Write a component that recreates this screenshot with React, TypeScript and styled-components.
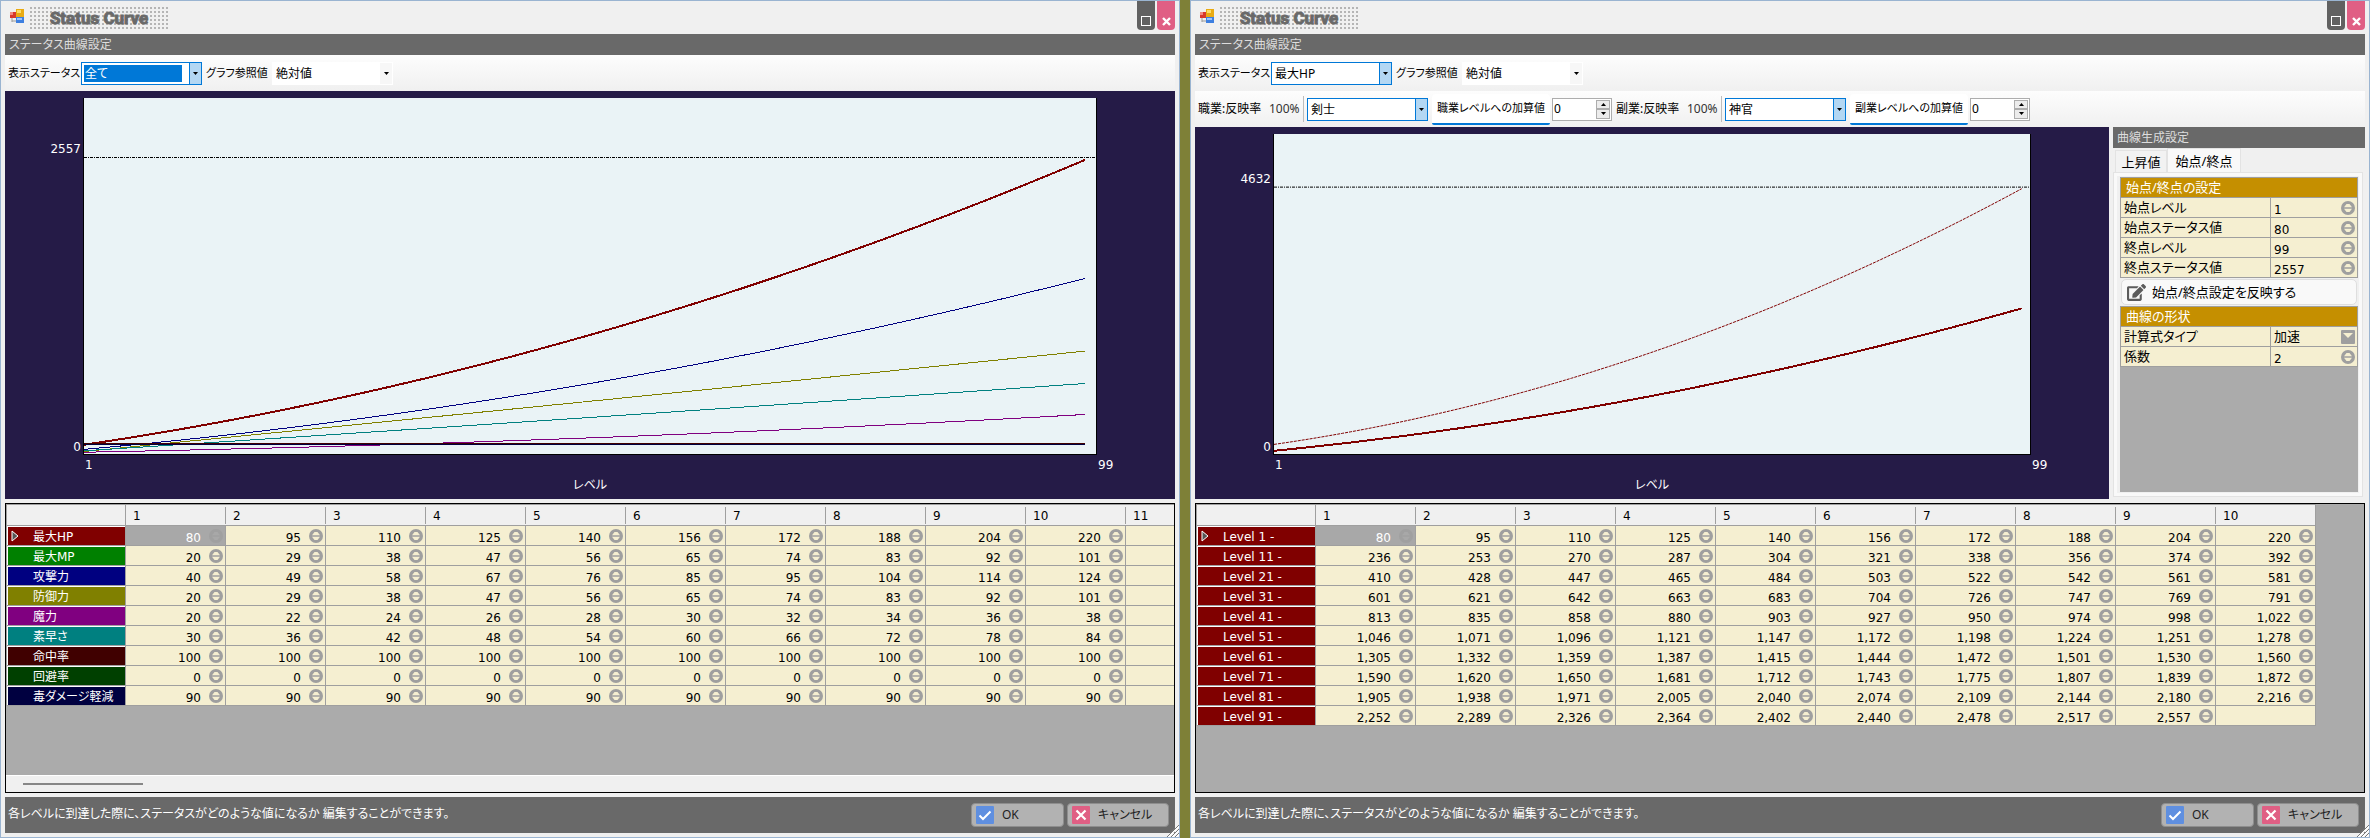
import React from "react";
import styled, { createGlobalStyle, css } from "styled-components";
import { FaEdit } from "react-icons/fa";

const uiFont = `"Noto Sans", "Noto Sans CJK JP", sans-serif`;
const numberFont = `"DejaVu Sans", "Noto Sans CJK JP", sans-serif`;
const line = "#9f9f9f";
const cream = "#f5efd1";
const bar = "#696969";
const navy = "#251b47";
const accent = "#0078d7";

const GlobalStyle = createGlobalStyle`
  *, *::before, *::after { box-sizing: border-box; }
  body {
    margin: 0;
    background: #7e8037;
    color: #000;
    font-family: ${uiFont};
    font-size: 12px;
    line-height: 16px;
    font-feature-settings: "palt";
  }
  button, input, select { font: inherit; color: inherit; font-feature-settings: inherit; }
`;

const Desktop = styled.main`
  display: grid;
  grid-template-columns: minmax(0, 1fr) minmax(0, 1fr);
  gap: 10px;
  min-height: 100vh;
`;

const Window = styled.section`
  position: relative;
  display: flex;
  flex-direction: column;
  padding: 0 4px 4px;
  border: 1px solid #9ab4d1;
  background: #f0f0f0;
`;

const TitleBar = styled.header`
  display: flex;
  align-items: flex-start;
  height: 33px;
  padding-left: 5px;
`;

const AppIcon = styled.svg`
  width: 14px;
  height: 14px;
  margin-top: 8px;
`;

const TitleGrip = styled.div`
  width: 138px;
  height: 22px;
  margin: 6px 0 0 6px;
  background-image: repeating-linear-gradient(180deg, transparent 0 2px, #f0f0f0 2px 4px),
    repeating-linear-gradient(90deg, #b5b5b5 0 2px, #f0f0f0 2px 4px);
`;

const Title = styled.h1`
  margin: 0;
  text-align: center;
  color: ${bar};
  font: bold 17px/23px Roboto, "Liberation Sans", sans-serif;
  -webkit-text-stroke: 1px ${bar};
`;

const WindowButtons = styled.div`
  display: flex;
  gap: 2px;
  margin-left: auto;
`;

const WindowButton = styled.button<{ $color: string }>`
  display: flex;
  width: 18px;
  height: 29px;
  padding: 0 4px 4px;
  align-items: flex-end;
  justify-content: center;
  border: 0;
  border-radius: 0 0 4px 4px;
  background: ${(p) => p.$color};
`;

const Caption = styled.h2`
  height: 21px;
  margin: 0;
  padding: 0 4px;
  background: ${bar};
  color: #ddd;
  font-size: 12px;
  font-weight: 400;
  line-height: 21px;
`;

const Toolbar = styled.div`
  display: flex;
  align-items: center;
  height: 36px;
  padding-left: 3px;
  background: linear-gradient(#fdfdfd, #f0f0f0);
  white-space: nowrap;
`;

const ToolLabel = styled.label<{ $width: number }>`
  width: ${(p) => p.$width}px;
  font-size: 11px;
`;

const RateLabel = styled.label`
  width: 71px;
`;

const Rate = styled.output`
  width: 33px;
  color: #333;
`;

const Separator = styled.span`
  width: 1px;
  height: 26px;
  margin: 0 3px 0 1px;
  background: #bdbdbd;
`;

const SelectBox = styled.span<{ $flat?: boolean }>`
  position: relative;
  display: flex;
  width: 121px;
  height: 23px;
  margin-right: 4px;
  border: 1px solid ${(p) => (p.$flat ? "#fff" : accent)};
  background: #fff;

  &::after {
    content: "";
    position: absolute;
    top: 0;
    right: 0;
    width: 12px;
    height: 21px;
    border-left: 1px solid ${(p) => (p.$flat ? "#f7f7f7" : accent)};
    background: ${(p) => (p.$flat ? "#f7f7f7" : "#b3d7f3")};
    pointer-events: none;
  }
`;

const Select = styled.select<{ $selected?: boolean }>`
  flex: 1;
  padding: 0 14px 0 3px;
  appearance: none;
  border: 0;
  outline: 0;
  background: transparent;
  line-height: 21px;
  ${(p) =>
    p.$selected &&
    css`
      color: #fff;
      background: linear-gradient(${accent}, ${accent}) 2px 2px / 98px 17px no-repeat;
      option { color: #000; }
    `}
`;

const SelectArrow = styled.svg`
  position: absolute;
  z-index: 1;
  top: 9px;
  right: 3px;
  width: 5px;
  height: 3px;
  pointer-events: none;
`;

const AddLabel = styled.label`
  width: 118px;
  height: 31px;
  margin-right: 2px;
  border-bottom: 2px solid ${accent};
  border-radius: 4px 4px 2px 2px;
  background: #fff;
  font-size: 11px;
  line-height: 28px;
  text-align: center;
`;

const SpinBox = styled.span`
  display: flex;
  width: 60px;
  height: 23px;
  padding: 1px;
  margin-right: 4px;
  border: 1px solid #adadad;
  background: #fff;
`;

const SpinInput = styled.input`
  flex: 1;
  min-width: 0;
  height: 18px;
  padding: 0;
  border: 0;
  outline: 0;
`;

const SpinButtons = styled.span`
  display: flex;
  flex-direction: column;
  width: 14px;
`;

const SpinButton = styled.button`
  display: flex;
  flex: 1;
  align-items: center;
  justify-content: center;
  padding: 0;
  border: 1px solid #adadad;
  background: #ececec;
`;

const Body = styled.div<{ $split?: boolean }>`
  display: grid;
  grid-template-columns: ${(p) => (p.$split ? "minmax(0, 1fr) 252px" : "minmax(0, 1fr)")};
  gap: 4px;
  flex: 1;
`;

const GraphArea = styled.figure`
  display: grid;
  grid-template-columns: 78px minmax(0, 1fr) 78px;
  grid-template-rows: minmax(200px, 1fr) 44px;
  margin: 0;
  padding-top: 7px;
  background: ${navy};
  color: #fff;
  font-family: ${numberFont};
`;

const YAxis = styled.div`
  display: grid;
  grid-template-rows: 59fr 298fr;
  align-items: end;
  padding-right: 2px;
  text-align: right;
`;

const Plot = styled.svg`
  width: 100%;
  height: 100%;
  min-height: 0;
  border: 1px solid #000;
  border-top: 0;
  background: #eaf3f6;
`;

const PlotCell = styled.div`
  display: flex;
  grid-column: 2 / 4;
  min-height: 0;
  margin-right: 78px;
  contain: size;
`;

const XAxis = styled.div`
  display: grid;
  grid-column: 2;
  align-content: start;
  row-gap: 4px;
  padding-top: 2px;
`;

const XStart = styled.span`
  padding-left: 2px;
`;

const XName = styled.span`
  font-family: ${uiFont};
  text-align: center;
`;

const XEnd = styled.span`
  padding: 2px 0 0 1px;
`;

const GridBox = styled.div`
  display: flex;
  flex-direction: column;
  height: 290px;
  margin-top: 4px;
  overflow: hidden;
  border: 1px solid #000;
  background: #ababab;
`;

const GridClip = styled.div`
  flex: 1;
  overflow: hidden;
`;

const DataTable = styled.table<{ $columns: number }>`
  width: ${(p) => 120 + p.$columns * 100}px;
  table-layout: fixed;
  border-collapse: separate;
  border-spacing: 0;
  font-family: ${numberFont};
  white-space: nowrap;
`;

const HeadCell = styled.th<{ $corner?: boolean; $last?: boolean }>`
  width: ${(p) => (p.$corner ? 120 : 100)}px;
  height: 22px;
  padding: 2px 0 0 7px;
  border: solid ${line};
  border-width: 1px ${(p) => (p.$corner || p.$last ? 1 : 0)}px 1px ${(p) => (p.$corner ? 1 : 0)}px;
  background: ${(p) => (p.$corner || p.$last ? "none" : `linear-gradient(${line}, ${line}) right center / 1px 17px no-repeat`)}
    #f0f0f0;
  font-weight: 400;
  line-height: 16px;
  text-align: left;
`;

const RowHead = styled.th<{ $color: string }>`
  height: 20px;
  padding: 0;
  border: solid ${line};
  border-width: 0 1px 1px 1px;
  background: ${(p) => p.$color};
  box-shadow: inset 1px 1px 0 #fff;
  color: #fff;
  font-weight: 400;
  text-align: left;
`;

const RowHeadInner = styled.span`
  display: grid;
  grid-template-columns: 22px 1fr;
  align-items: center;
  height: 19px;
  padding: 2px 0 0 4px;
  line-height: 16px;
`;

const RowMarker = styled.svg`
  width: 9px;
  height: 12px;
  margin-bottom: 2px;
`;

const ValueCell = styled.td<{ $selected?: boolean }>`
  height: 20px;
  padding: 0;
  border: solid ${line};
  border-width: 0 1px 1px 0;
  background: ${(p) => (p.$selected ? "#a8a8a8" : cream)};
  color: ${(p) => (p.$selected ? "#fff" : "#000")};
`;

const ValueInner = styled.span`
  display: flex;
  justify-content: flex-end;
  gap: 8px;
  height: 19px;
  padding-right: 2px;
  line-height: 25px;
`;

const RoundButton = styled.button<{ $dim?: boolean }>`
  display: block;
  flex: none;
  width: 14px;
  height: 14px;
  margin-top: 3px;
  padding: 0;
  border: 0;
  background: none;
  opacity: ${(p) => (p.$dim ? 0.8 : 1)};

  svg { display: block; }
`;

const ScrollTrack = styled.div`
  height: 17px;
  padding: 7px 17px;
  border-top: 1px solid #fff;
  background: #f0f0f0;
`;

const ScrollThumb = styled.div`
  width: 120px;
  height: 2px;
  background: #878787;
`;

const StatusBar = styled.footer`
  display: flex;
  align-items: center;
  gap: 3px;
  height: 36px;
  margin-top: 4px;
  padding: 0 6px 0 3px;
  background: ${bar};
  color: #fff;
`;

const Message = styled.p`
  flex: 1;
  margin: 0;
  padding-bottom: 2px;
`;

const DialogButton = styled.button<{ $width: number }>`
  display: flex;
  align-items: center;
  gap: 8px;
  width: ${(p) => p.$width}px;
  height: 24px;
  padding: 0 4px;
  border: 1px solid #8e8e8e;
  border-radius: 4px;
  background: #b2b2b2;
  color: #222;
`;

const ResizeGrip = styled.svg`
  position: absolute;
  right: 0;
  bottom: 0;
  width: 12px;
  height: 12px;
`;

const SidePanel = styled.aside`
  display: flex;
  flex-direction: column;
  padding-bottom: 2px;
`;

const Tabs = styled.div`
  display: flex;
  align-items: flex-end;
  height: 24px;
  padding-left: 2px;
`;

const Tab = styled.button<{ $active?: boolean }>`
  width: ${(p) => (p.$active ? 74 : 52)}px;
  height: ${(p) => (p.$active ? 24 : 22)}px;
  padding: 0;
  border: 1px solid #e3e3e3;
  border-bottom: 0;
  background: ${(p) => (p.$active ? "#f9f9f9" : "#f2f2f2")};
  font-size: 13px;
`;

const TabPage = styled.div`
  display: flex;
  flex: 1;
  flex-direction: column;
  margin-right: 2px;
  border: 1px solid #e3e3e3;
  padding: 3px;
  background: #f9f9f9;
`;

const TabContent = styled.div`
  display: flex;
  flex: 1;
  flex-direction: column;
  padding: 1px 1px 1px 3px;
  background: #f0f0f0;
`;

const PropTable = styled.table`
  width: 100%;
  table-layout: fixed;
  border-collapse: separate;
  border-spacing: 0;
  border: solid ${line};
  border-width: 1px 0 0 1px;
  font-size: 13px;
`;

const PropTitle = styled.th`
  height: 20px;
  padding: 0 5px;
  border: solid ${line};
  border-width: 0 1px 1px 0;
  background: #c58f00;
  color: #fff;
  font-weight: 400;
  line-height: 19px;
  text-align: left;
`;

const PropCell = styled.td`
  height: 20px;
  padding: 0 0 0 3px;
  border: solid ${line};
  border-width: 0 1px 1px 0;
  background: ${cream};
  line-height: 19px;
`;

const PropValue = styled.span`
  display: flex;
  height: 19px;
  padding-right: 2px;
`;

const PropInput = styled.input`
  flex: 1;
  min-width: 0;
  height: 19px;
  padding: 5px 0 0;
  border: 0;
  outline: 0;
  background: transparent;
  font: 12px/14px ${numberFont};
`;

const PropSelect = styled.select`
  flex: 1;
  min-width: 0;
  height: 19px;
  padding: 0;
  appearance: none;
  border: 0;
  background: transparent;
`;

const PropArrow = styled.svg`
  width: 14px;
  height: 14px;
  margin-top: 3px;
`;

const ApplyButton = styled.button`
  display: flex;
  align-items: center;
  gap: 6px;
  height: 26px;
  margin: 1px 1px;
  padding: 0 5px;
  border: 1px solid #dedede;
  border-radius: 5px;
  background: #f9f9f9;
  font-size: 13px;

  svg { color: #5c5c5c; }
`;

const PropFiller = styled.div`
  flex: 1;
  background: #ababab;
`;

type Curve = { color: string; from: number; to: number; bend: number; width: number; dash?: string };

// Samples one status curve across the plot, which is 1000 units wide and high.
function curvePoints({ from, to, bend }: Curve) {
  return Array.from({ length: 99 }, (_, i) => {
    const t = i / 98;
    const rise = (1 - bend) * t + bend * t * t;
    return `${(t * 989).toFixed(1)},${(from + (to - from) * rise).toFixed(1)}`;
  }).join(" ");
}

function Graph({ max, curves, zero }: { max: string; curves: Curve[]; zero?: boolean }) {
  return (
    <GraphArea>
      <YAxis>
        <span>{max}</span>
        <span>0</span>
      </YAxis>
      <PlotCell>
        <Plot viewBox="0 0 1000 1000" preserveAspectRatio="none" shapeRendering="crispEdges" role="img" aria-label="ステータス曲線">
          <line x1="0" x2="1000" y1="166" y2="166" stroke="#000" strokeDasharray="3 1 1 1" vectorEffect="non-scaling-stroke" />
          {curves.map((c) => (
            <polyline
              key={c.color + c.from}
              points={curvePoints(c)}
              fill="none"
              stroke={c.color}
              strokeWidth={c.width}
              strokeDasharray={c.dash}
              vectorEffect="non-scaling-stroke"
            />
          ))}
          {zero && (
            <>
              <line x1="0" x2="989" y1="971" y2="971" stroke="#400000" vectorEffect="non-scaling-stroke" />
              <line x1="0" x2="989" y1="974" y2="974" stroke="#000040" vectorEffect="non-scaling-stroke" />
            </>
          )}
        </Plot>
      </PlotCell>
      <XAxis>
        <XStart>1</XStart>
        <XName>レベル</XName>
      </XAxis>
      <XEnd>99</XEnd>
    </GraphArea>
  );
}

function Stepper({ dim }: { dim?: boolean }) {
  const inner = dim ? "#a8a8a8" : cream;
  return (
    <RoundButton type="button" aria-label="値を変更" $dim={dim}>
      <svg width="14" height="14" viewBox="0 0 14 14">
        <circle cx="7" cy="7" r="7" fill="#9f9f9f" />
        <path d="M3 6.2 L5.5 3 H8.5 L11 6.2 Z M3 7.8 L5.5 11 H8.5 L11 7.8 Z" fill={inner} />
      </svg>
    </RoundButton>
  );
}

function DropDown({ id, value, flat, selected }: { id: string; value: string; flat?: boolean; selected?: boolean }) {
  return (
    <SelectBox $flat={flat}>
      <Select id={id} defaultValue={value} $selected={selected}>
        <option>{value}</option>
      </Select>
      <SelectArrow viewBox="0 0 5 3">
        <path d="M0 0H5L2.5 3Z" />
      </SelectArrow>
    </SelectBox>
  );
}

function Spinner({ id }: { id: string }) {
  return (
    <SpinBox>
      <SpinInput id={id} defaultValue="0" />
      <SpinButtons>
        <SpinButton type="button" aria-label="増やす">
          <svg width="5" height="3" viewBox="0 0 5 3"><path d="M0 3H5L2.5 0Z" /></svg>
        </SpinButton>
        <SpinButton type="button" aria-label="減らす">
          <svg width="5" height="3" viewBox="0 0 5 3"><path d="M0 0H5L2.5 3Z" /></svg>
        </SpinButton>
      </SpinButtons>
    </SpinBox>
  );
}

function JobFields({ id, kind, job }: { id: string; kind: string; job: string }) {
  return (
    <>
      <RateLabel htmlFor={`${id}-job`}>{kind}:反映率</RateLabel>
      <Rate>100%</Rate>
      <Separator />
      <DropDown id={`${id}-job`} value={job} />
      <AddLabel htmlFor={`${id}-add`}>{kind}レベルへの加算値</AddLabel>
      <Spinner id={`${id}-add`} />
    </>
  );
}

type Row = { name: string; color: string; values: string[] };

function StatusTable({ rows, columns }: { rows: Row[]; columns: number }) {
  const indexes = Array.from({ length: columns }, (_, i) => i);
  const last = columns === 10 ? 9 : -1;
  return (
    <DataTable $columns={columns}>
      <thead>
        <tr>
          <HeadCell $corner aria-label="項目" />
          {indexes.map((i) => (
            <HeadCell key={i} scope="col" $last={i === last}>{i + 1}</HeadCell>
          ))}
        </tr>
      </thead>
      <tbody>
        {rows.map((row, r) => (
          <tr key={row.name}>
            <RowHead scope="row" $color={row.color}>
              <RowHeadInner>
                {r === 0 ? (
                  <RowMarker viewBox="0 0 9 12">
                    <path d="M1 1 L7 6 L1 11 Z" fill="#555" stroke="#fff" />
                  </RowMarker>
                ) : (
                  <span />
                )}
                <span>{row.name}</span>
              </RowHeadInner>
            </RowHead>
            {indexes.map((i) => (
              <ValueCell key={i} $selected={r === 0 && i === 0}>
                {row.values[i] !== undefined && (
                  <ValueInner>
                    {row.values[i]}
                    <Stepper dim={r === 0 && i === 0} />
                  </ValueInner>
                )}
              </ValueCell>
            ))}
          </tr>
        ))}
      </tbody>
    </DataTable>
  );
}

type FrameProps = { id: string; status: string; selected?: boolean; children: React.ReactNode };

function Frame({ id, status, selected, children }: FrameProps) {
  return (
    <Window>
      <TitleBar>
        <AppIcon viewBox="0 0 14 14">
          <path d="M0 6H5M2 6V13M2 12H6" stroke="#999" fill="none" />
          <rect x="0" y="3" width="6" height="6" fill="#d8382c" />
          <rect x="0" y="3" width="3" height="3" fill="#f08a80" />
          <rect x="6" y="0" width="8" height="8" fill="#e9ab12" />
          <rect x="7" y="1" width="4" height="3" fill="#fbdc6a" />
          <rect x="6" y="8" width="8" height="6" fill="#3d7fe0" />
          <rect x="7" y="9" width="5" height="2" fill="#9cc4fa" />
        </AppIcon>
        <TitleGrip>
          <Title>Status Curve</Title>
        </TitleGrip>
        <WindowButtons>
          <WindowButton type="button" aria-label="最大化" $color="#616161">
            <svg width="10" height="10" viewBox="0 0 10 10"><rect x=".5" y=".5" width="9" height="9" fill="none" stroke="#fff" /></svg>
          </WindowButton>
          <WindowButton type="button" aria-label="閉じる" $color="#e05f84">
            <svg width="9" height="9" viewBox="0 0 9 9"><path d="M1 1L8 8M8 1L1 8" stroke="#fff" strokeWidth="2.4" /></svg>
          </WindowButton>
        </WindowButtons>
      </TitleBar>
      <Caption>ステータス曲線設定</Caption>
      <Toolbar>
        <ToolLabel $width={73} htmlFor={`${id}-status`}>表示ステータス</ToolLabel>
        <DropDown id={`${id}-status`} value={status} selected={selected} />
        <ToolLabel $width={66} htmlFor={`${id}-reference`}>グラフ参照値</ToolLabel>
        <DropDown id={`${id}-reference`} value="絶対値" flat />
      </Toolbar>
      {children}
      <StatusBar>
        <Message>各レベルに到達した際に、ステータスがどのような値になるか 編集することができます。</Message>
        <DialogButton type="button" $width={93}>
          <svg width="18" height="18" viewBox="0 0 18 18">
            <rect width="18" height="18" rx="1" fill="#5f8fe0" />
            <path d="M3.5 9.5L7 13L14.5 5.5" fill="none" stroke="#fff" strokeWidth="2" />
          </svg>
          OK
        </DialogButton>
        <DialogButton type="button" $width={102}>
          <svg width="18" height="18" viewBox="0 0 18 18">
            <rect width="18" height="18" rx="1" fill="#e05f84" />
            <path d="M4.5 4.5L13.5 13.5M13.5 4.5L4.5 13.5" stroke="#fff" strokeWidth="2.2" />
          </svg>
          キャンセル
        </DialogButton>
      </StatusBar>
      <ResizeGrip viewBox="0 0 12 12">
        <path d="M1 12L12 1M5 12L12 5M9 12L12 9" stroke="#fff" strokeWidth="2" />
        <path d="M0 12L12 0M4 12L12 4M8 12L12 8" stroke="#777" />
      </ResizeGrip>
    </Window>
  );
}

const statusCurves: Curve[] = [
  { color: "#808000", from: 993, to: 711, bend: 0.02, width: 1 },
  { color: "#008080", from: 991, to: 802, bend: 0.04, width: 1 },
  { color: "#800080", from: 995, to: 889, bend: 0.5, width: 1 },
  { color: "#000080", from: 987, to: 507, bend: 0.48, width: 1 },
  { color: "#800000", from: 974, to: 174, bend: 0.48, width: 2 },
];

const hpCurves: Curve[] = [
  { color: "#800000", from: 970, to: 171, bend: 0.58, width: 1, dash: "3 1" },
  { color: "#800000", from: 990, to: 545, bend: 0.48, width: 2 },
];

const statusRows: Row[] = [
  ["最大HP", "#800000", "80 95 110 125 140 156 172 188 204 220"],
  ["最大MP", "#008000", "20 29 38 47 56 65 74 83 92 101"],
  ["攻撃力", "#000080", "40 49 58 67 76 85 95 104 114 124"],
  ["防御力", "#808000", "20 29 38 47 56 65 74 83 92 101"],
  ["魔力", "#800080", "20 22 24 26 28 30 32 34 36 38"],
  ["素早さ", "#008080", "30 36 42 48 54 60 66 72 78 84"],
  ["命中率", "#400000", "100 100 100 100 100 100 100 100 100 100"],
  ["回避率", "#004000", "0 0 0 0 0 0 0 0 0 0"],
  ["毒ダメージ軽減", "#000040", "90 90 90 90 90 90 90 90 90 90"],
].map(([name, color, values]) => ({ name, color, values: values.split(" ") }));

const levelRows: Row[] = [
  "80 95 110 125 140 156 172 188 204 220",
  "236 253 270 287 304 321 338 356 374 392",
  "410 428 447 465 484 503 522 542 561 581",
  "601 621 642 663 683 704 726 747 769 791",
  "813 835 858 880 903 927 950 974 998 1,022",
  "1,046 1,071 1,096 1,121 1,147 1,172 1,198 1,224 1,251 1,278",
  "1,305 1,332 1,359 1,387 1,415 1,444 1,472 1,501 1,530 1,560",
  "1,590 1,620 1,650 1,681 1,712 1,743 1,775 1,807 1,839 1,872",
  "1,905 1,938 1,971 2,005 2,040 2,074 2,109 2,144 2,180 2,216",
  "2,252 2,289 2,326 2,364 2,402 2,440 2,478 2,517 2,557",
].map((values, i) => ({ name: `Level ${i * 10 + 1} -`, color: "#800000", values: values.split(" ") }));

function PropRow({ id, name, value }: { id: string; name: string; value: string }) {
  return (
    <tr>
      <PropCell>
        <label htmlFor={id}>{name}</label>
      </PropCell>
      <PropCell>
        <PropValue>
          <PropInput id={id} defaultValue={value} />
          <Stepper />
        </PropValue>
      </PropCell>
    </tr>
  );
}

function CurveSettings() {
  return (
    <SidePanel>
      <Caption>曲線生成設定</Caption>
      <Tabs role="tablist">
        <Tab type="button" role="tab">上昇値</Tab>
        <Tab type="button" role="tab" aria-selected $active>始点/終点</Tab>
      </Tabs>
      <TabPage>
        <TabContent>
          <PropTable>
            <colgroup><col /><col width="87" /></colgroup>
            <thead>
              <tr><PropTitle colSpan={2}>始点/終点の設定</PropTitle></tr>
            </thead>
            <tbody>
              <PropRow id="start-level" name="始点レベル" value="1" />
              <PropRow id="start-value" name="始点ステータス値" value="80" />
              <PropRow id="end-level" name="終点レベル" value="99" />
              <PropRow id="end-value" name="終点ステータス値" value="2557" />
            </tbody>
          </PropTable>
          <ApplyButton type="button">
            <FaEdit size={19} />
            始点/終点設定を反映する
          </ApplyButton>
          <PropTable>
            <colgroup><col /><col width="87" /></colgroup>
            <thead>
              <tr><PropTitle colSpan={2}>曲線の形状</PropTitle></tr>
            </thead>
            <tbody>
              <tr>
                <PropCell><label htmlFor="formula">計算式タイプ</label></PropCell>
                <PropCell>
                  <PropValue>
                    <PropSelect id="formula" defaultValue="加速"><option>加速</option></PropSelect>
                    <PropArrow viewBox="0 0 14 14">
                      <rect width="14" height="14" rx="1" fill="#9f9f9f" />
                      <path d="M2 3H12L7 8Z" fill={cream} />
                    </PropArrow>
                  </PropValue>
                </PropCell>
              </tr>
              <PropRow id="factor" name="係数" value="2" />
            </tbody>
          </PropTable>
          <PropFiller />
        </TabContent>
      </TabPage>
    </SidePanel>
  );
}

export default function App() {
  return (
    <>
      <GlobalStyle />
      <Desktop lang="ja">
        <Frame id="all" status="全て" selected>
          <Body>
            <Graph max="2557" curves={statusCurves} zero />
          </Body>
          <GridBox>
            <GridClip>
              <StatusTable rows={statusRows} columns={11} />
            </GridClip>
            <ScrollTrack>
              <ScrollThumb />
            </ScrollTrack>
          </GridBox>
        </Frame>
        <Frame id="hp" status="最大HP">
          <Toolbar>
            <JobFields id="main" kind="職業" job="剣士" />
            <JobFields id="sub" kind="副業" job="神官" />
          </Toolbar>
          <Body $split>
            <Graph max="4632" curves={hpCurves} />
            <CurveSettings />
          </Body>
          <GridBox>
            <GridClip>
              <StatusTable rows={levelRows} columns={10} />
            </GridClip>
          </GridBox>
        </Frame>
      </Desktop>
    </>
  );
}
